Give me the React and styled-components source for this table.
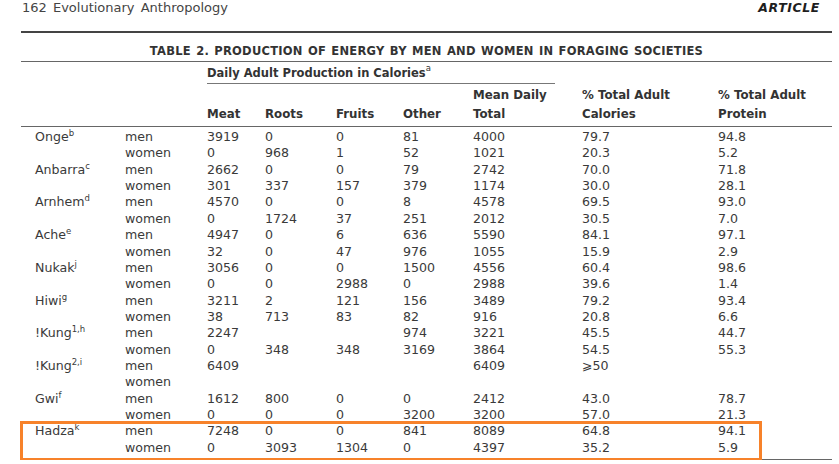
import React from "react";
import styled, { createGlobalStyle } from "styled-components";

const Global = createGlobalStyle`
  html, body {
    margin: 0;
    padding: 0;
    background: #fff;
  }
  body {
    font-family: "DejaVu Sans", "Liberation Sans", sans-serif;
    color: #383838;
  }
`;

const COLS = "104px 82px 58px 71px 67px 70px 109px 136px 114px";
const ROW_H = 16.35;

const societies = [
  { name: "Onge", sup: "b", men: ["3919", "0", "0", "81", "4000", "79.7", "94.8"], women: ["0", "968", "1", "52", "1021", "20.3", "5.2"] },
  { name: "Anbarra", sup: "c", men: ["2662", "0", "0", "79", "2742", "70.0", "71.8"], women: ["301", "337", "157", "379", "1174", "30.0", "28.1"] },
  { name: "Arnhem", sup: "d", men: ["4570", "0", "0", "8", "4578", "69.5", "93.0"], women: ["0", "1724", "37", "251", "2012", "30.5", "7.0"] },
  { name: "Ache", sup: "e", men: ["4947", "0", "6", "636", "5590", "84.1", "97.1"], women: ["32", "0", "47", "976", "1055", "15.9", "2.9"] },
  { name: "Nukak", sup: "j", men: ["3056", "0", "0", "1500", "4556", "60.4", "98.6"], women: ["0", "0", "2988", "0", "2988", "39.6", "1.4"] },
  { name: "Hiwi", sup: "g", men: ["3211", "2", "121", "156", "3489", "79.2", "93.4"], women: ["38", "713", "83", "82", "916", "20.8", "6.6"] },
  { name: "!Kung", sup: "1,h", men: ["2247", "", "", "974", "3221", "45.5", "44.7"], women: ["0", "348", "348", "3169", "3864", "54.5", "55.3"] },
  { name: "!Kung", sup: "2,i", men: ["6409", "", "", "", "6409", "\u2A7E50", ""], women: ["", "", "", "", "", "", ""] },
  { name: "Gwi", sup: "f", men: ["1612", "800", "0", "0", "2412", "43.0", "78.7"], women: ["0", "0", "0", "3200", "3200", "57.0", "21.3"] },
  { name: "Hadza", sup: "k", men: ["7248", "0", "0", "841", "8089", "64.8", "94.1"], women: ["0", "3093", "1304", "0", "4397", "35.2", "5.9"] },
];

const Page = styled.div`
  width: 811px;
  padding-left: 21px;
`;

const RunningHead = styled.div`
  display: flex;
  justify-content: space-between;
  align-items: baseline;
  height: 16px;
  line-height: 16px;
  padding: 0 12px 0 1px;
  margin-bottom: 15px;
`;

const Folio = styled.span`
  font-size: 13px;
  color: #444;
  word-spacing: 2px;
`;

const Section = styled.span`
  font-size: 12.5px;
  font-weight: bold;
  font-style: italic;
  letter-spacing: 0.6px;
  color: #1e1e1e;
`;

const Table = styled.div`
  border-top: 2px solid #444;
  border-bottom: 1px solid #666;
`;

const Title = styled.div`
  padding-top: 8px;
  line-height: 20px;
  font-size: 11.5px;
  font-weight: bold;
  letter-spacing: 0.25px;
  word-spacing: 1px;
  text-align: center;
  color: #333;
  border-bottom: 1px solid #666;
`;

const Head = styled.div`
  display: grid;
  grid-template-columns: ${COLS};
  align-items: end;
  font-weight: bold;
  font-size: 11.8px;
  color: #333;
  border-bottom: 1px solid #666;
  padding-bottom: 1.5px;
`;

const Spanner = styled.div`
  grid-column: 3 / span 7;
  width: 348px;
  padding: 3px 0 2px;
  line-height: 16px;
  font-size: 11.5px;
  border-bottom: 1px solid #777;
  margin-bottom: 2px;
`;

const HeadCell = styled.div`
  grid-column: ${(p) => p.$col};
  grid-row: 2;
  line-height: 19.3px;
  white-space: nowrap;
`;

const Body = styled.div`
  position: relative;
  padding: 2px 0 3px;
`;

const Row = styled.div`
  display: grid;
  grid-template-columns: ${COLS};
  height: ${ROW_H}px;
  line-height: ${ROW_H}px;
  font-size: 12.6px;
  color: #3a3a3a;
  white-space: nowrap;
`;

const NameCell = styled.div`
  padding-left: 14px;
`;

const Sup = styled.sup`
  font-size: 8.5px;
  line-height: 0;
  vertical-align: ${(p) => (p.$head ? "6px" : "5px")};
  font-weight: normal;
`;

const Highlight = styled.div`
  position: absolute;
  left: -1px;
  width: 742px;
  top: ${(p) => p.$top}px;
  height: 40px;
  box-sizing: border-box;
  border: 3px solid #f7822a;
  pointer-events: none;
`;

function DataRow({ name, sup, sex, values }) {
  return (
    <Row>
      <NameCell>
        {name}
        {name && <Sup>{sup}</Sup>}
      </NameCell>
      <div>{sex}</div>
      {values.map((v, i) => (
        <div key={i}>{v}</div>
      ))}
    </Row>
  );
}

export default function App() {
  const hadzaIndex = societies.length - 1;
  return (
    <>
      <Global />
      <Page>
        <RunningHead>
          <Folio>162 Evolutionary Anthropology</Folio>
          <Section>ARTICLE</Section>
        </RunningHead>
        <Table>
          <Title>
            TABLE 2. PRODUCTION OF ENERGY BY MEN AND WOMEN IN FORAGING SOCIETIES
          </Title>
          <Head>
            <Spanner>
              Daily Adult Production in Calories<Sup $head>a</Sup>
            </Spanner>
            <HeadCell $col={3}>Meat</HeadCell>
            <HeadCell $col={4}>Roots</HeadCell>
            <HeadCell $col={5}>Fruits</HeadCell>
            <HeadCell $col={6}>Other</HeadCell>
            <HeadCell $col={7}>
              Mean Daily
              <br />
              Total
            </HeadCell>
            <HeadCell $col={8}>
              % Total Adult
              <br />
              Calories
            </HeadCell>
            <HeadCell $col={9}>
              % Total Adult
              <br />
              Protein
            </HeadCell>
          </Head>
          <Body>
            {societies.map((s, i) => (
              <React.Fragment key={i}>
                <DataRow name={s.name} sup={s.sup} sex="men" values={s.men} />
                <DataRow sex="women" values={s.women} />
              </React.Fragment>
            ))}
            <Highlight $top={2 + hadzaIndex * 2 * ROW_H - 2.5} />
          </Body>
        </Table>
      </Page>
    </>
  );
}
